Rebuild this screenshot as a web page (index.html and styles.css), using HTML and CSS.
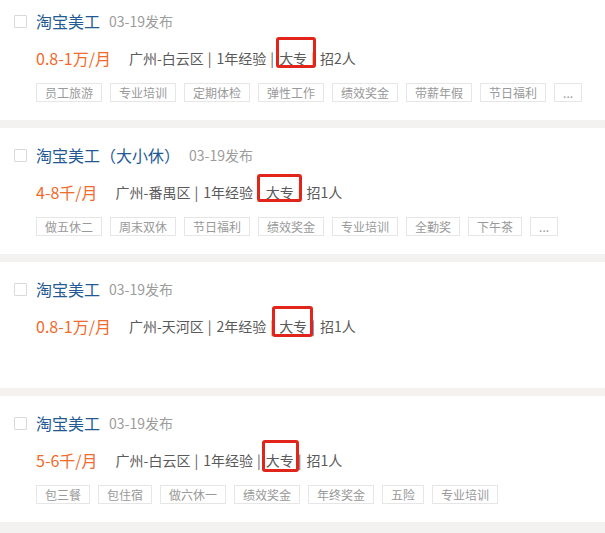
FILE: index.html
```html
<!DOCTYPE html>
<html>
<head>
    <meta charset="utf-8">
    <title>职位列表</title>
    <link rel="stylesheet" href="styles.css">
</head>
<body>
    <div class="job-list">
        <div class="job">
            <div class="job-head">
                <span class="check"></span>
                <a class="job-title">淘宝美工</a>
                <span class="job-date">03-19发布</span>
            </div>
            <div class="job-info">
                <span class="salary">0.8-1万/月</span>
                <span class="meta">广州-白云区<span class="sep">|</span>1年经验<span class="sep">|</span><span class="edu mark-a">大专</span><span class="sep">|</span>招2人</span>
            </div>
            <ul class="tags">
                <li>员工旅游</li>
                <li>专业培训</li>
                <li>定期体检</li>
                <li>弹性工作</li>
                <li>绩效奖金</li>
                <li>带薪年假</li>
                <li>节日福利</li>
                <li>...</li>
            </ul>
        </div>

        <div class="job">
            <div class="job-head">
                <span class="check"></span>
                <a class="job-title">淘宝美工（大小休）</a>
                <span class="job-date">03-19发布</span>
            </div>
            <div class="job-info">
                <span class="salary">4-8千/月</span>
                <span class="meta">广州-番禺区<span class="sep">|</span>1年经验<span class="sep">|</span><span class="edu mark-b">大专</span><span class="sep">|</span>招1人</span>
            </div>
            <ul class="tags">
                <li>做五休二</li>
                <li>周末双休</li>
                <li>节日福利</li>
                <li>绩效奖金</li>
                <li>专业培训</li>
                <li>全勤奖</li>
                <li>下午茶</li>
                <li>...</li>
            </ul>
        </div>

        <div class="job">
            <div class="job-head">
                <span class="check"></span>
                <a class="job-title">淘宝美工</a>
                <span class="job-date">03-19发布</span>
            </div>
            <div class="job-info">
                <span class="salary">0.8-1万/月</span>
                <span class="meta">广州-天河区<span class="sep">|</span>2年经验<span class="sep">|</span><span class="edu mark-c">大专</span><span class="sep">|</span>招1人</span>
            </div>
        </div>

        <div class="job">
            <div class="job-head">
                <span class="check"></span>
                <a class="job-title">淘宝美工</a>
                <span class="job-date">03-19发布</span>
            </div>
            <div class="job-info">
                <span class="salary">5-6千/月</span>
                <span class="meta">广州-白云区<span class="sep">|</span>1年经验<span class="sep">|</span><span class="edu mark-d">大专</span><span class="sep">|</span>招1人</span>
            </div>
            <ul class="tags">
                <li>包三餐</li>
                <li>包住宿</li>
                <li>做六休一</li>
                <li>绩效奖金</li>
                <li>年终奖金</li>
                <li>五险</li>
                <li>专业培训</li>
            </ul>
        </div>
    </div>
</body>
</html>
```

FILE: styles.css
```css
body {
    margin: 0;
    background-color: #f3f2f1;
    font-family: "Noto Sans CJK SC", "Noto Sans", sans-serif;
}
.job-list {
    margin-top: -6px;
}
.job {
    height: 126px;
    box-sizing: border-box;
    padding: 17px 14px 0;
    margin-bottom: 8px;
    background: white;
}
.job-head {
    display: flex;
    align-items: center;
    height: 20px;
}
.check {
    width: 13px;
    height: 13px;
    box-sizing: border-box;
    border: 1px solid #d9d9d9;
    border-radius: 1px;
    margin-right: 9px;
}
.job-title {
    font-size: 16px;
    line-height: 20px;
    color: #245a93;
}
.job-date {
    margin-left: 9px;
    font-size: 14px;
    color: #9c9c9c;
}
.job-info {
    display: flex;
    align-items: center;
    height: 20px;
    margin: 17px 0 0 22px;
}
.salary {
    margin-right: 18px;
    font-size: 16px;
    color: #f06a2b;
}
.meta {
    font-size: 14px;
    line-height: 20px;
    color: #5a5a5a;
}
.sep {
    margin: 0 5px 0 4px;
}
.edu {
    position: relative;
    display: inline-block;
}
/* red marker box drawn over the education field */
.edu::after {
    content: "";
    position: absolute;
    border: 3px solid #e1251b;
    border-radius: 3px;
}
.mark-a::after { top: -11px; bottom: 0; left: -3px; right: -9px; }
.mark-b::after { top: -8px; bottom: 0; left: -9px; right: -8px; }
.mark-c::after { top: -10px; bottom: -1px; left: -7px; right: -6px; }
.mark-d::after { top: -10px; bottom: -2px; left: -4px; right: -5px; }
.tags {
    display: flex;
    gap: 8px;
    list-style: none;
    margin: 15px 0 0 22px;
    padding: 0;
}
.tags li {
    padding: 0 8px;
    border: 1px solid #e6e6e6;
    font-size: 12px;
    line-height: 17px;
    color: #999;
}
```
